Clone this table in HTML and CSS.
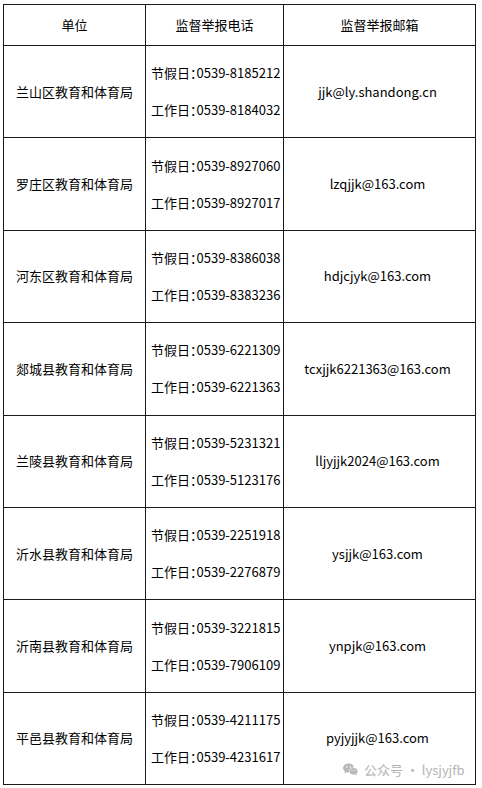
FILE: index.html
```html
<!DOCTYPE html>
<html lang="zh-CN">
<head>
<meta charset="utf-8">
<link rel="stylesheet" href="styles.css">
</head>
<body>
<div class="page">
  <div class="table">
    <div class="cell head">单位</div>
    <div class="cell head">监督举报电话</div>
    <div class="cell head">监督举报邮箱</div>

    <div class="cell unit">兰山区教育和体育局</div>
    <div class="cell phone"><p>节假日：0539-8185212</p><p>工作日：0539-8184032</p></div>
    <div class="cell mail">jjk@ly.shandong.cn</div>

    <div class="cell unit">罗庄区教育和体育局</div>
    <div class="cell phone"><p>节假日：0539-8927060</p><p>工作日：0539-8927017</p></div>
    <div class="cell mail">lzqjjk@163.com</div>

    <div class="cell unit">河东区教育和体育局</div>
    <div class="cell phone"><p>节假日：0539-8386038</p><p>工作日：0539-8383236</p></div>
    <div class="cell mail">hdjcjyk@163.com</div>

    <div class="cell unit">郯城县教育和体育局</div>
    <div class="cell phone"><p>节假日：0539-6221309</p><p>工作日：0539-6221363</p></div>
    <div class="cell mail">tcxjjk6221363@163.com</div>

    <div class="cell unit">兰陵县教育和体育局</div>
    <div class="cell phone"><p>节假日：0539-5231321</p><p>工作日：0539-5123176</p></div>
    <div class="cell mail">lljyjjk2024@163.com</div>

    <div class="cell unit">沂水县教育和体育局</div>
    <div class="cell phone"><p>节假日：0539-2251918</p><p>工作日：0539-2276879</p></div>
    <div class="cell mail">ysjjk@163.com</div>

    <div class="cell unit">沂南县教育和体育局</div>
    <div class="cell phone"><p>节假日：0539-3221815</p><p>工作日：0539-7906109</p></div>
    <div class="cell mail">ynpjk@163.com</div>

    <div class="cell unit">平邑县教育和体育局</div>
    <div class="cell phone"><p>节假日：0539-4211175</p><p>工作日：0539-4231617</p></div>
    <div class="cell mail">pyjyjjk@163.com</div>
  </div>
  <div class="watermark">
    <svg class="wx" width="15" height="13" viewBox="0 0 30 26">
      <ellipse cx="11" cy="10" rx="11" ry="9" fill="#b8b8b8"/>
      <path d="M4 16 L3 21 L8 18 Z" fill="#b8b8b8"/>
      <circle cx="7.5" cy="8" r="1.5" fill="#fff"/>
      <circle cx="14.5" cy="8" r="1.5" fill="#fff"/>
      <ellipse cx="21" cy="16.5" rx="9" ry="7.5" fill="#fff"/>
      <ellipse cx="21" cy="16.5" rx="8" ry="6.5" fill="#b8b8b8"/>
      <path d="M26 21 L27.5 25 L23 22.5 Z" fill="#b8b8b8"/>
      <circle cx="18" cy="15" r="1.2" fill="#fff"/>
      <circle cx="24" cy="15" r="1.2" fill="#fff"/>
    </svg>
    <span>公众号 · lysjyjfb</span>
  </div>
</div>
</body>
</html>
```

FILE: styles.css
```css
html, body {
  margin: 0;
  padding: 0;
  background: #fff;
}
.page {
  position: relative;
  width: 482px;
  height: 788px;
  overflow: hidden;
  padding: 4px 0 0 3px;
  box-sizing: border-box;
  font-family: "Noto Sans CJK SC", "Noto Sans", sans-serif;
  color: #000;
  font-size: 13px;
}
.table {
  display: grid;
  grid-template-columns: 141px 137px 191px;
  grid-template-rows: 40px;
  grid-auto-rows: 91.4px;
  gap: 1px;
  padding: 1px;
  background: #1a1a1a;
  width: max-content;
}
.cell {
  background: #fff;
  display: flex;
  align-items: center;
  justify-content: center;
  line-height: 20px;
  white-space: nowrap;
}
.head {
  padding-bottom: 1px;
}
.phone {
  flex-direction: column;
  align-items: flex-start;
  justify-content: center;
  gap: 17px;
  padding-left: 5px;
  font-feature-settings: "halt";
}
.phone p {
  margin: 0;
}
.mail {
  padding-right: 4px;
}
.watermark {
  position: absolute;
  left: 343px;
  top: 760px;
  display: flex;
  align-items: center;
  gap: 6px;
  color: #b4b4b4;
  font-size: 13px;
}
```
